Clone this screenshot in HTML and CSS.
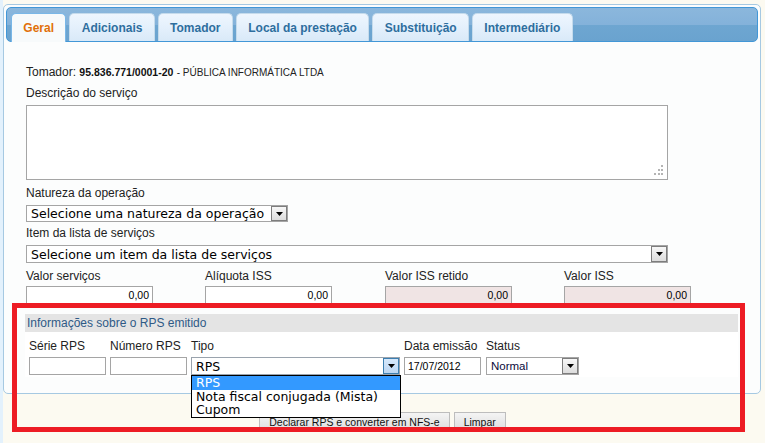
FILE: index.html
```html
<!DOCTYPE html>
<html lang="pt-BR">
<head>
    <meta charset="UTF-8">
    <title>Declarar RPS</title>
    <link rel="stylesheet" href="styles.css">
</head>
<body>
    <div class="page">
        <div class="tabs">
            <ul class="tab-nav">
                <li class="tab active">Geral</li>
                <li class="tab">Adicionais</li>
                <li class="tab">Tomador</li>
                <li class="tab">Local da prestação</li>
                <li class="tab">Substituição</li>
                <li class="tab">Intermediário</li>
            </ul>

            <div class="tab-panel">
                <p class="tomador">Tomador: <b>95.836.771/0001-20</b> <span class="razao">- PÚBLICA INFORMÁTICA LTDA</span></p>

                <label class="field-label gap-6">Descrição do serviço</label>
                <div class="textarea">
                    <svg class="grip" width="11" height="11" viewBox="0 0 11 11">
                        <rect x="8" y="0" width="2" height="2" fill="#b4b4b4"/>
                        <rect x="5" y="4" width="2" height="2" fill="#b4b4b4"/>
                        <rect x="8" y="4" width="2" height="2" fill="#b4b4b4"/>
                        <rect x="1" y="8" width="2" height="2" fill="#b4b4b4"/>
                        <rect x="5" y="8" width="2" height="2" fill="#b4b4b4"/>
                        <rect x="8" y="8" width="2" height="2" fill="#b4b4b4"/>
                    </svg>
                </div>

                <label class="field-label gap-6">Natureza da operação</label>
                <div class="select select-natureza">
                    <span class="select-text">Selecione uma natureza da operação</span>
                    <span class="select-arrow"><svg width="7" height="4" viewBox="0 0 7 4"><polygon points="0,0 7,0 3.5,4" fill="#000"/></svg></span>
                </div>

                <label class="field-label gap-4">Item da lista de serviços</label>
                <div class="select select-item">
                    <span class="select-text">Selecione um item da lista de serviços</span>
                    <span class="select-arrow"><svg width="7" height="4" viewBox="0 0 7 4"><polygon points="0,0 7,0 3.5,4" fill="#000"/></svg></span>
                </div>

                <div class="valores">
                    <div class="campo">
                        <label class="field-label">Valor serviços</label>
                        <div class="input num">0,00</div>
                    </div>
                    <div class="campo">
                        <label class="field-label">Alíquota ISS</label>
                        <div class="input num">0,00</div>
                    </div>
                    <div class="campo">
                        <label class="field-label">Valor ISS retido</label>
                        <div class="input num readonly">0,00</div>
                    </div>
                    <div class="campo">
                        <label class="field-label">Valor ISS</label>
                        <div class="input num readonly">0,00</div>
                    </div>
                </div>

                <div class="rps">
                    <div class="rps-title">Informações sobre o RPS emitido</div>
                    <div class="rps-fields">
                        <div class="campo serie">
                            <label class="field-label">Série RPS</label>
                            <div class="input"></div>
                        </div>
                        <div class="campo numero">
                            <label class="field-label">Número RPS</label>
                            <div class="input"></div>
                        </div>
                        <div class="campo tipo">
                            <label class="field-label">Tipo</label>
                            <div class="select select-tipo">
                                <span class="select-text">RPS</span>
                                <span class="select-arrow"><svg width="7" height="4" viewBox="0 0 7 4"><polygon points="0,0 7,0 3.5,4" fill="#000"/></svg></span>
                            </div>
                            <ul class="dropdown">
                                <li class="selected">RPS</li>
                                <li>Nota fiscal conjugada (Mista)</li>
                                <li>Cupom</li>
                            </ul>
                        </div>
                        <div class="campo data">
                            <label class="field-label">Data emissão</label>
                            <div class="input">17/07/2012</div>
                        </div>
                        <div class="campo status">
                            <label class="field-label">Status</label>
                            <div class="select select-status">
                                <span class="select-text">Normal</span>
                                <span class="select-arrow"><svg width="7" height="4" viewBox="0 0 7 4"><polygon points="0,0 7,0 3.5,4" fill="#000"/></svg></span>
                            </div>
                        </div>
                    </div>
                </div>
            </div>
        </div>

        <div class="acoes">
            <button class="btn">Declarar RPS e converter em NFS-e</button>
            <button class="btn">Limpar</button>
        </div>

        <div class="destaque"></div>
    </div>
</body>
</html>
```

FILE: styles.css
```css
* {
    margin: 0;
    padding: 0;
    box-sizing: border-box;
}

body {
    width: 765px;
    height: 443px;
    overflow: hidden;
    background: #fcfaf1;
    font-family: "Liberation Sans", Arial, sans-serif;
    color: #222;
}

.page {
    position: relative;
    height: 443px;
    padding-top: 4px;
    border-left: 3px solid #e3f1fc;
}

/* abas */
.tabs {
    width: 758px;
    height: 390px;
    padding: 2px;
    border: 1px solid #a6c9e2;
    border-radius: 5px;
    background: #fcfdfd;
}

.tab-nav {
    display: flex;
    align-items: flex-start;
    gap: 3px;
    height: 35px;
    padding: 5px 4px 0;
    list-style: none;
    border: 1px solid #4297d7;
    border-radius: 5px;
    background: linear-gradient(#8bb7dc 0%, #84b2da 50%, #6ea6d1 52%, #6aa3cf 100%);
}

.tab {
    height: 28px;
    padding: 0 11.35px;
    line-height: 28px;
    font-size: 12px;
    font-weight: bold;
    color: #2e6e9e;
    border: 1px solid #c5dbec;
    border-bottom: none;
    border-radius: 5px 5px 0 0;
    background: linear-gradient(#eef6fe 0%, #e4f0fc 50%, #d9e9f8 100%);
}

.tab.active {
    position: relative;
    height: 29px;
    margin-bottom: -1px;
    color: #e17009;
    border-color: #79b7e7;
    background: #f7fafb;
}

.tab-panel {
    padding: 23px 20px 0;
}

.tomador {
    font-size: 12px;
    line-height: 14px;
    color: #222;
}

.tomador b {
    font-size: 10.5px;
    color: #111;
}

.tomador .razao {
    font-size: 10px;
}

.field-label {
    display: block;
    font-size: 12px;
    line-height: 14px;
    color: #222;
    white-space: nowrap;
}

.gap-6 { margin-top: 6px; }
.gap-4 { margin-top: 4px; }

.textarea {
    position: relative;
    width: 642px;
    height: 75px;
    margin-top: 5px;
    border: 1px solid #a5a5a5;
    background: #fff;
}

.grip {
    position: absolute;
    right: 3px;
    bottom: 3px;
}

/* selects desenhados */
.select {
    display: flex;
    align-items: center;
    margin-top: 5px;
    height: 17px;
    border: 1px solid #a5a5a5;
    background: #fff;
    font-family: "DejaVu Sans", Verdana, sans-serif;
    font-size: 12.5px;
    color: #000;
}

.select-text {
    flex: 1;
    padding-left: 4px;
    line-height: 15px;
    white-space: nowrap;
    overflow: hidden;
}

.select-arrow {
    display: flex;
    align-items: center;
    justify-content: center;
    width: 16px;
    height: 15px;
    border: 1px solid #7d7d7d;
    background: linear-gradient(#f7f7f7, #dcdcdc);
}

.select-natureza {
    width: 262px;
}

.select-item {
    width: 642px;
    height: 18px;
}

.select-item .select-arrow {
    height: 16px;
}

/* valores */
.valores {
    display: grid;
    grid-template-columns: 179px 180px 179px 179px;
    margin-top: 6px;
}

.valores .input {
    margin-top: 3px;
}

.input {
    height: 18px;
    border: 1px solid #a5a5a5;
    background: #fff;
    font-size: 10.5px;
    line-height: 16px;
    color: #000;
    padding: 0 3px;
}

.input.num {
    width: 127px;
    text-align: right;
}

.input.readonly {
    background: #f0e4e4;
}

/* bloco RPS */
.rps {
    margin-top: 10px;
    margin-left: -1px;
    background: #fff;
    height: 63px;
}

.rps-title {
    height: 18px;
    padding-left: 2px;
    line-height: 18px;
    font-size: 12px;
    color: #2f5a86;
    background: #e4e4e4;
}

.rps-fields {
    display: flex;
    gap: 4px;
    margin-top: 7px;
    padding-left: 4px;
}

.rps-fields .campo {
    display: flex;
    flex-direction: column;
}

.rps-fields .input,
.rps-fields .select {
    margin-top: 4px;
    height: 18px;
}

.serie .input,
.numero .input {
    width: 77px;
}

.tipo {
    position: relative;
    width: 209px;
}

.select-tipo {
    width: 209px;
    border-color: #9aa3ad;
}

.select-tipo .select-arrow {
    height: 16px;
    border-color: #3c7fb1;
    background: linear-gradient(#d6e8fb, #bcd6f2);
}

.dropdown {
    position: absolute;
    top: 100%;
    left: 0;
    width: 210px;
    list-style: none;
    border: 1px solid #000;
    background: #fff;
    font-family: "DejaVu Sans", Verdana, sans-serif;
    font-size: 12.5px;
    line-height: 13.7px;
    color: #000;
    z-index: 2;
}

.dropdown li {
    padding-left: 4px;
    white-space: nowrap;
}

.dropdown li.selected {
    background: #3399ff;
    color: #fff;
}

.data .input {
    width: 77px;
}

.status {
    margin-left: 1px;
}

.select-status {
    width: 93px;
    font-family: "Liberation Sans", Arial, sans-serif;
    font-size: 11.5px;
    color: #0a0a3a;
}

.select-status .select-arrow {
    height: 16px;
}

/* botões */
.acoes {
    display: flex;
    justify-content: center;
    gap: 4px;
    margin-top: 18px;
    padding-right: 3px;
}

.btn {
    height: 19px;
    padding: 0 9px;
    font-family: "Liberation Sans", Arial, sans-serif;
    font-size: 10.5px;
    color: #111;
    border: 1px solid #bdbdbd;
    background: linear-gradient(#f4f4f4, #dedede);
}

/* marcação vermelha sobre a captura */
.destaque {
    position: absolute;
    left: 9px;
    top: 303px;
    width: 733px;
    height: 129px;
    border: 5px solid #ed1c24;
    pointer-events: none;
}
```
